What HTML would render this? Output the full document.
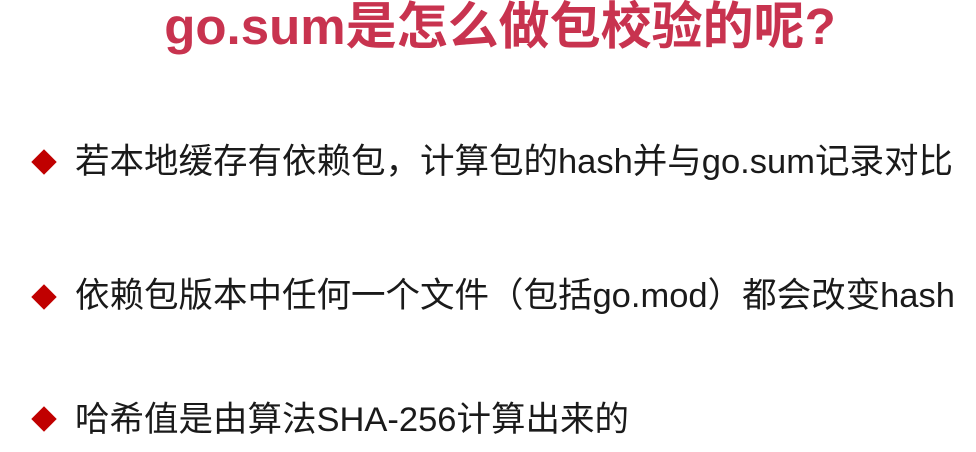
<!DOCTYPE html>
<html><head><meta charset="utf-8"><style>
html,body{margin:0;padding:0;background:#fff;width:976px;height:452px;overflow:hidden;position:relative;font-family:"Liberation Sans","Noto Sans CJK SC",sans-serif}
.t{position:absolute;left:0;width:1000px;top:-3px;text-align:center;font-size:51px;font-weight:bold;color:#c8334f;line-height:60px;white-space:nowrap}
.l{position:absolute;left:75px;font-size:34.5px;color:#1a1a1a;line-height:40px;white-space:nowrap}
.d{position:absolute;left:35px;width:18px;height:18px;background:#c00000;transform:rotate(45deg)}
</style></head><body>
<div class="t">go.sum是怎么做包校验的呢?</div>
<div class="d" style="top:153px"></div>
<div class="l" style="top:142px">若本地缓存有依赖包，计算包的hash并与go.sum记录对比</div>
<div class="d" style="top:288px"></div>
<div class="l" style="top:276px">依赖包版本中任何一个文件（包括go.mod）都会改变hash</div>
<div class="d" style="top:410px"></div>
<div class="l" style="top:400px">哈希值是由算法SHA-256计算出来的</div>
</body></html>
